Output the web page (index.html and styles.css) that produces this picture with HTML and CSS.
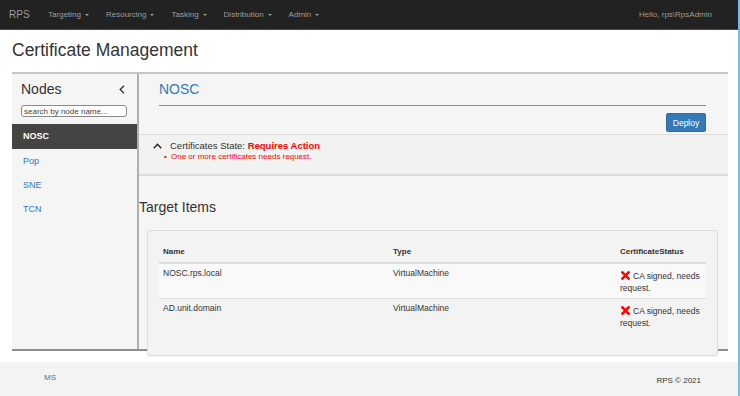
FILE: index.html
```html
<!DOCTYPE html>
<html lang="en">
<head>
<meta charset="utf-8">
<title>Certificate Management</title>
<link rel="stylesheet" href="styles.css">
</head>
<body>
<nav class="navbar">
  <span class="brand">RPS</span>
  <ul class="menu">
    <li>Targeting<span class="caret"></span></li>
    <li>Resourcing<span class="caret"></span></li>
    <li>Tasking<span class="caret"></span></li>
    <li>Distribution<span class="caret"></span></li>
    <li>Admin<span class="caret"></span></li>
  </ul>
  <span class="hello">Hello, rps\RpsAdmin</span>
</nav>

<div class="page">
  <h1 class="title">Certificate Management</h1>
  <div class="workspace">
    <aside class="sidebar">
      <div class="side-head">
        <span class="nodes-title">Nodes</span>
        <svg class="chev-left" width="6" height="9" viewBox="0 0 6 9"><polyline points="5,0.8 1.2,4.5 5,8.2" fill="none" stroke="#333" stroke-width="1.3"/></svg>
      </div>
      <input class="search" type="text" placeholder="search by node name...">
      <ul class="node-list">
        <li class="node active">NOSC</li>
        <li class="node"><a class="node-link">Pop</a></li>
        <li class="node"><a class="node-link">SNE</a></li>
        <li class="node"><a class="node-link">TCN</a></li>
      </ul>
    </aside>

    <main class="main">
      <div class="main-head">
        <h2 class="node-name">NOSC</h2>
        <div class="actions"><button class="btn-deploy">Deploy</button></div>
      </div>

      <section class="cert-state">
        <svg class="chev-up" width="9" height="6" viewBox="0 0 9 6"><polyline points="0.8,5.2 4.5,1.2 8.2,5.2" fill="none" stroke="#222" stroke-width="1.4"/></svg>
        <div class="state-body">
          <div class="state-line">Certificates State: <strong class="state-bad">Requires Action</strong></div>
          <ul class="state-msgs"><li>One or more certificates needs request.</li></ul>
        </div>
      </section>

      <h3 class="section-title">Target Items</h3>
      <div class="card">
        <table class="items">
          <colgroup><col class="c-name"><col class="c-type"><col class="c-status"></colgroup>
          <thead>
            <tr><th>Name</th><th>Type</th><th>CertificateStatus</th></tr>
          </thead>
          <tbody>
            <tr class="odd">
              <td>NOSC.rps.local</td>
              <td>VirtualMachine</td>
              <td class="status"><svg class="x-icon" width="9" height="9" viewBox="0 0 10 10"><path d="M1.6 1.6 L8.4 8.4 M8.4 1.6 L1.6 8.4" stroke="#f00" stroke-width="2.8" stroke-linecap="square"/></svg>CA signed, needs request.</td>
            </tr>
            <tr>
              <td>AD.unit.domain</td>
              <td>VirtualMachine</td>
              <td class="status"><svg class="x-icon" width="9" height="9" viewBox="0 0 10 10"><path d="M1.6 1.6 L8.4 8.4 M8.4 1.6 L1.6 8.4" stroke="#f00" stroke-width="2.8" stroke-linecap="square"/></svg>CA signed, needs request.</td>
            </tr>
          </tbody>
        </table>
      </div>
    </main>
  </div>
</div>

<footer class="footer">
  <a class="footer-link">MS</a>
  <span class="copy">RPS © 2021</span>
</footer>
</body>
</html>
```

FILE: styles.css
```css
html {
  border-right: 2px solid #6cbfe6;
}
body {
  margin: 0;
  font-family: "Liberation Sans", Arial, sans-serif;
  color: #333;
  background: #fff;
}

/* navbar */
.navbar {
  display: flex;
  align-items: center;
  height: 29px;
  background: #222;
  border-bottom: 1px solid #4a4a4a;
  padding: 0 26px 0 9px;
}
.brand {
  font-size: 10px;
  color: #9d9d9d;
  margin-right: 10px;
}
.menu {
  display: flex;
  list-style: none;
  margin: 0;
  padding: 0;
}
.menu li {
  display: flex;
  align-items: center;
  font-size: 8px;
  color: #9d9d9d;
  padding: 0 8.5px;
}
.caret {
  width: 0;
  height: 0;
  border-left: 2.5px solid transparent;
  border-right: 2.5px solid transparent;
  border-top: 2.5px solid #9d9d9d;
  margin-left: 4px;
}
.hello {
  margin-left: auto;
  font-size: 8px;
  color: #9d9d9d;
}

/* page */
.page {
  padding: 0 10px 0 12px;
}
.title {
  margin: 0 0 12px;
  padding-top: 11px;
  font-size: 17.5px;
  line-height: 19px;
  font-weight: normal;
  color: #333;
}
.workspace {
  display: flex;
  height: 275px;
  border-top: 2px solid #c4c4c4;
  border-bottom: 2px solid #8e8e8e;
}

/* sidebar */
.sidebar {
  width: 125px;
  flex: none;
  background: #f5f5f5;
  border-right: 2px solid #b0b0b0;
}
.side-head {
  display: flex;
  justify-content: space-between;
  align-items: center;
  padding: 7px 12px 0 9px;
  height: 16px;
}
.nodes-title {
  font-size: 14px;
  line-height: 16px;
  color: #333;
}
.search {
  display: block;
  box-sizing: border-box;
  margin: 8px 0 0 9px;
  width: 106px;
  height: 12px;
  padding: 0 2px;
  border: 1px solid #8a8a8a;
  border-radius: 3px;
  background: #fff;
  font-family: "Liberation Sans", Arial, sans-serif;
  font-size: 8px;
  outline: none;
}
.search::placeholder {
  color: #444;
}
.node-list {
  list-style: none;
  margin: 7px 0 0;
  padding: 0;
}
.node {
  height: 24px;
  line-height: 24px;
  padding-left: 11px;
  font-size: 9px;
}
.node.active {
  height: 25px;
  line-height: 25px;
  background: #444;
  color: #fff;
  font-weight: bold;
}
.node-link {
  color: #337ab7;
}

/* main */
.main {
  flex: 1;
  background: #f5f5f5;
}
.main-head {
  padding: 7px 22px 0 20px;
}
.node-name {
  margin: 0;
  font-size: 14px;
  line-height: 16px;
  font-weight: normal;
  color: #337ab7;
  padding-bottom: 8px;
  border-bottom: 1px solid #8a8a8a;
}
.actions {
  display: flex;
  justify-content: flex-end;
  padding: 7px 0 2px;
}
.btn-deploy {
  width: 40px;
  height: 19px;
  padding: 0;
  background: #337ab7;
  border: 1px solid #2e6da4;
  border-radius: 2px;
  color: #fff;
  font-family: "Liberation Sans", Arial, sans-serif;
  font-size: 8.5px;
}

.cert-state {
  display: flex;
  align-items: flex-start;
  box-sizing: border-box;
  height: 42px;
  padding: 5px 0 0 14px;
  background: #f2f2f2;
  border-top: 1px solid #dcdcdc;
  border-bottom: 2px solid #dcdcdc;
}
.chev-up {
  margin: 3px 8px 0 0;
  flex: none;
}
.state-line {
  font-size: 9.5px;
  line-height: 12px;
  color: #333;
}
.state-bad {
  color: #f00;
}
.state-msgs {
  list-style: none;
  margin: 0 0 0 -6px;
  padding: 0;
  font-size: 8px;
  line-height: 10px;
  color: #f00;
}
.state-msgs li::before {
  content: "•";
  display: inline-block;
  width: 7px;
}

.section-title {
  margin: 0;
  padding-top: 23px;
  font-size: 14px;
  line-height: 16px;
  font-weight: normal;
  color: #333;
}
.card {
  margin: 15px 10px 0 8px;
  padding: 11px 11px 22px;
  background: #f3f3f3;
  border: 1px solid #dcdcdc;
  border-radius: 3px;
  box-shadow: 0 1px 1px rgba(0, 0, 0, 0.05);
}
.items {
  width: 100%;
  border-collapse: collapse;
  font-size: 8.5px;
  color: #333;
}
.c-name { width: 230px; }
.c-type { width: 227px; }
.c-status { width: 90px; }
.items th {
  text-align: left;
  font-size: 8px;
  font-weight: bold;
  line-height: 12px;
  padding: 4px 4px;
  border-bottom: 2px solid #dcdcdc;
}
.items td {
  vertical-align: top;
  line-height: 12px;
  padding: 3px 4px 0;
  height: 31px;
}
.items td.status {
  padding-top: 6px;
  height: 28px;
}
.items tbody tr + tr td {
  border-top: 1px solid #dcdcdc;
}
.items tr.odd td {
  background: #f9f9f9;
}
.x-icon {
  vertical-align: -1px;
  margin: 0 3px 0 1px;
}

/* footer */
.footer {
  display: flex;
  justify-content: space-between;
  align-items: flex-start;
  margin-top: 11px;
  height: 34px;
  padding: 0 37px 0 44px;
  background: #f3f3f3;
  font-size: 8px;
  line-height: 10px;
}
.footer-link {
  color: #337ab7;
  margin-top: 11px;
}
.copy {
  color: #333;
  margin-top: 14px;
}
```
